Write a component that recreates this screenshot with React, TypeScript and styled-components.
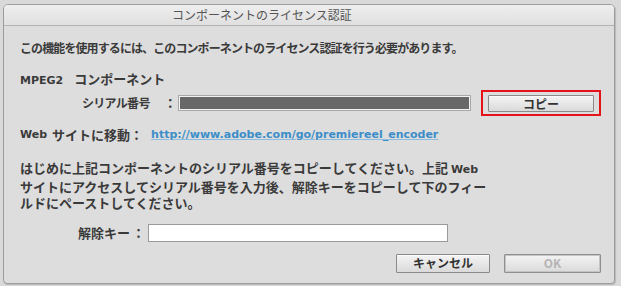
import React from "react";
import styled, { createGlobalStyle } from "styled-components";

const CJK = `"Noto Sans CJK JP", "Noto Sans", sans-serif`;
const LATIN = `"DejaVu Sans", "Noto Sans CJK JP", sans-serif`;

const Global = createGlobalStyle`
  html, body { margin: 0; padding: 0; background: #d9d9d9; }
  body { width: 621px; height: 286px; overflow: hidden; font-family: ${CJK}; }
`;

const Page = styled.div`
  padding: 4px 7px 3px 3px;
  width: 621px;
  height: 286px;
  box-sizing: border-box;
`;

const Dialog = styled.div`
  width: 612px;
  height: 280px;
  box-sizing: border-box;
  border: 1px solid #9c9c9c;
  border-radius: 5px 5px 4px 4px;
  background: #dddddd;
  overflow: hidden;
  display: flex;
  flex-direction: column;
  box-shadow: 1px 1px 1px rgba(0, 0, 0, 0.15);
`;

const TitleBar = styled.div`
  height: 20px;
  flex: none;
  display: flex;
  align-items: center;
  justify-content: center;
  padding-right: 94px;
  background: linear-gradient(#eeeeee, #e0e0e0);
  border-bottom: 1px solid #b4b4b4;
  font-size: 12px;
  color: #555;
  line-height: 16px;
`;

const Body = styled.div`
  flex: 1;
  display: flex;
  flex-direction: column;
  padding: 14px 13px 0 16px;
  color: #3a3a3a;
  font-weight: 700;
`;

const Line = styled.div<{ $size?: number; $spacing?: number; $top?: number }>`
  font-size: ${(p) => p.$size ?? 13}px;
  letter-spacing: ${(p) => p.$spacing ?? 0}px;
  line-height: 16px;
  margin-top: ${(p) => p.$top ?? 0}px;
  white-space: nowrap;
`;

const Latin = styled.span<{ $gap?: number }>`
  font-family: ${LATIN};
  font-size: 11px;
  font-weight: 700;
  margin-right: ${(p) => p.$gap ?? 0}px;
`;

const Row = styled.div<{ $top: number; $indent: number; $height?: number }>`
  display: flex;
  align-items: center;
  margin-top: ${(p) => p.$top}px;
  padding-left: ${(p) => p.$indent}px;
  height: ${(p) => (p.$height ? `${p.$height}px` : "auto")};
  font-size: 13px;
  line-height: 16px;
  white-space: nowrap;
`;

const Label = styled.span<{ $size?: number; $spacing?: number }>`
  font-size: ${(p) => p.$size ?? 13}px;
  letter-spacing: ${(p) => p.$spacing ?? 0}px;
`;

const Colon = styled.span<{ $gap: number }>`
  font-size: 13px;
  margin-left: ${(p) => p.$gap}px;
`;

const SerialField = styled.div`
  margin-left: 1px;
  width: 297px;
  height: 16px;
  box-sizing: border-box;
  background: #686868;
  border: 1px solid #a8a8a8;
  box-shadow: inset 0 0 0 1px #f2f2f2;
`;

const Highlight = styled.div`
  margin-left: 10px;
  padding: 3px 5px 2px 5px;
  border: 2px solid #e5121a;
  display: flex;
`;

const Button = styled.button<{ $w: number; $h: number; $disabled?: boolean }>`
  width: ${(p) => p.$w}px;
  height: ${(p) => p.$h}px;
  box-sizing: border-box;
  padding: 0;
  border: 1px solid ${(p) => (p.$disabled ? "#8f8f8f" : "#8a8a8a")};
  box-shadow: ${(p) => (p.$disabled ? "inset 0 0 0 1px #c4c4c4" : "inset 0 1px 0 #fafafa")};
  border-radius: 1px;
  background: linear-gradient(#f4f4f4, #dadada);
  font-family: ${CJK};
  font-size: 12px;
  font-weight: 700;
  line-height: 14px;
  color: ${(p) => (p.$disabled ? "#b4b4b4" : "#333")};
  display: flex;
  align-items: center;
  justify-content: center;
`;

const Link = styled.a`
  margin-left: 8px;
  font-family: ${LATIN};
  font-size: 11px;
  font-weight: 700;
  color: #3c8ec8;
  text-decoration: underline;
  text-decoration-color: #8cbce0;
`;

const Paragraph = styled.p`
  margin: 17px 0 0 0;
  font-size: 13px;
  line-height: 16.5px;
  white-space: nowrap;
`;

const KeyInput = styled.input`
  margin-left: 3px;
  width: 300px;
  height: 18px;
  box-sizing: border-box;
  border: 1px solid #9a9a9a;
  background: #ffffff;
  padding: 0;
  outline: none;
`;

const Actions = styled.div`
  display: flex;
  justify-content: flex-end;
  gap: 14px;
  margin-top: 12px;
`;

export default function App() {
  return (
    <>
      <Global />
      <Page>
        <Dialog>
          <TitleBar>コンポーネントのライセンス認証</TitleBar>
          <Body>
            <Line $size={12} $spacing={-0.9}>
              この機能を使用するには、このコンポーネントのライセンス認証を行う必要があります。
            </Line>
            <Line $top={15}>
              <Latin $gap={11}>MPEG2</Latin>コンポーネント
            </Line>
            <Row $top={1} $indent={62} $height={26}>
              <Label $size={12} $spacing={-0.7}>シリアル番号</Label>
              <Colon $gap={14}>：</Colon>
              <SerialField />
              <Highlight>
                <Button $w={106} $h={17}>コピー</Button>
              </Highlight>
            </Row>
            <Row $top={11} $indent={0}>
              <Latin $gap={5}>Web</Latin>
              <Label>サイトに移動</Label>
              <Colon $gap={0}>：</Colon>
              <Link href="#">http://www.adobe.com/go/premiereel_encoder</Link>
            </Row>
            <Paragraph>
              はじめに上記コンポーネントのシリアル番号をコピーしてください。上記 <Latin>Web</Latin>
              <br />
              サイトにアクセスしてシリアル番号を入力後、解除キーをコピーして下のフィー
              <br />
              ルドにペーストしてください。
            </Paragraph>
            <Row $top={12} $indent={58}>
              <Label>解除キー</Label>
              <Colon $gap={2}>：</Colon>
              <KeyInput />
            </Row>
            <Actions>
              <Button $w={94} $h={19}>キャンセル</Button>
              <Button $w={97} $h={19} $disabled>OK</Button>
            </Actions>
          </Body>
        </Dialog>
      </Page>
    </>
  );
}
